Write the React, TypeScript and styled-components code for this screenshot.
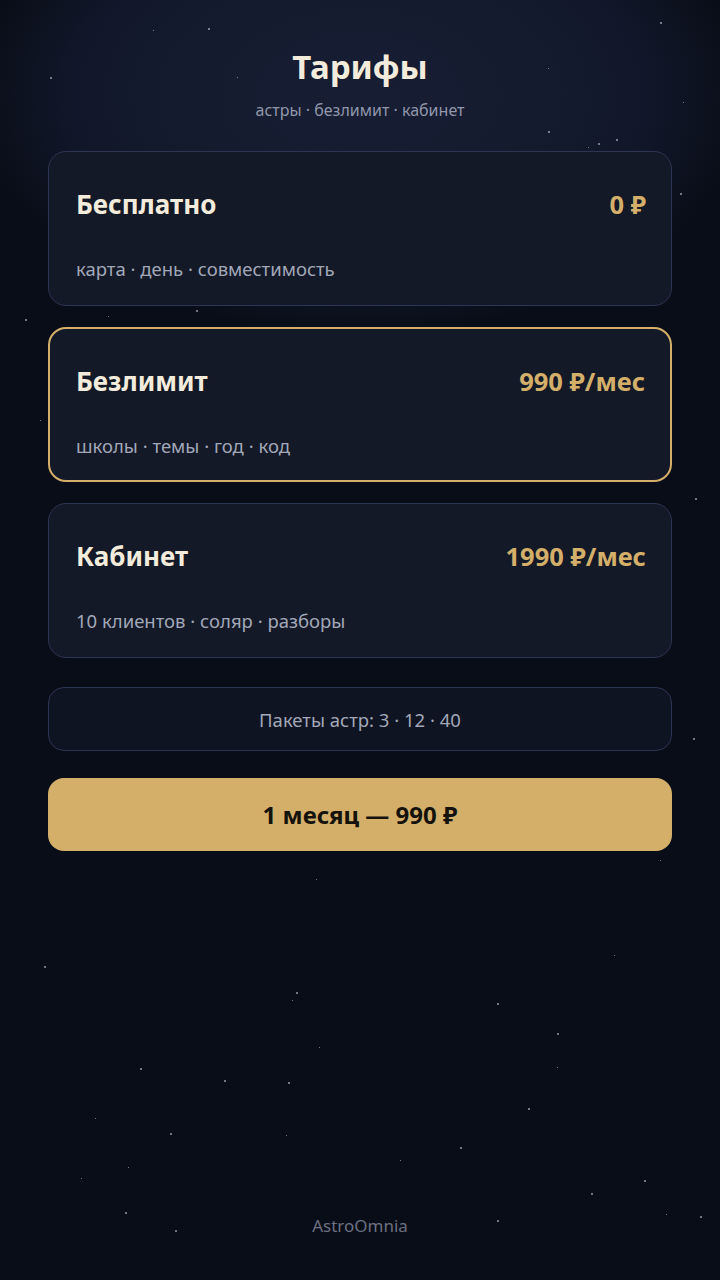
import styled, { createGlobalStyle } from "styled-components";

const GlobalStyle = createGlobalStyle`
  * { box-sizing: border-box; }
  html, body { margin: 0; padding: 0; background: #090d17; }
  body { font-family: "Noto Sans", "Open Sans", sans-serif; }
`;

const stars: [number, number, number][] = [
  [208, 28, 2], [50, 77, 2], [237, 77, 1], [153, 30, 1], [660, 22, 2], [548, 68, 1],
  [548, 131, 2], [598, 143, 2], [616, 139, 2], [588, 147, 1], [680, 193, 2], [25, 319, 2],
  [108, 316, 1], [196, 310, 2], [695, 498, 2], [693, 738, 2], [316, 879, 1], [44, 966, 2],
  [614, 955, 1], [296, 992, 2], [292, 1000, 1], [497, 1003, 2], [557, 1033, 2], [319, 1047, 1],
  [140, 1068, 2], [557, 1067, 1], [224, 1080, 2], [288, 1082, 2], [528, 1108, 2], [95, 1118, 1],
  [170, 1133, 2], [286, 1135, 1], [460, 1147, 2], [128, 1167, 1], [81, 1178, 1], [644, 1180, 2],
  [591, 1193, 2], [125, 1212, 2], [700, 1216, 2], [666, 1214, 1], [497, 1220, 2], [175, 1230, 2],
  [683, 102, 1], [40, 420, 1], [660, 860, 1], [400, 1160, 1],
];

const tariffs = [
  { name: "Бесплатно", price: "0 ₽", note: "карта · день · совместимость", active: false },
  { name: "Безлимит", price: "990 ₽/мес", note: "школы · темы · год · код", active: true },
  { name: "Кабинет", price: "1990 ₽/мес", note: "10 клиентов · соляр · разборы", active: false },
];

const Screen = styled.div`
  position: relative;
  min-height: 100vh;
  overflow: hidden;
  display: flex;
  flex-direction: column;
  padding: 0 48px 43px;
  background:
    radial-gradient(ellipse 390px 240px at 50% 95px, #171d33 0%, #151b2f 45%, #111729 75%, rgba(9, 13, 23, 0) 100%),
    #090d17;
`;

const Star = styled.span`
  position: absolute;
  border-radius: 50%;
  background: #c9cbd6;
  opacity: 0.75;
`;

const Header = styled.header`
  position: relative;
  display: flex;
  flex-direction: column;
  align-items: center;
  padding-top: 45px;
`;

const Title = styled.h1`
  margin: 0;
  font-size: 33px;
  line-height: 44px;
  font-weight: 700;
  color: #f3ecdc;
`;

const Subtitle = styled.p`
  margin: 11px 0 0;
  font-size: 16px;
  line-height: 20px;
  color: #9097ab;
`;

const List = styled.div`
  position: relative;
  display: flex;
  flex-direction: column;
  gap: 21px;
  margin-top: 31px;
`;

const Card = styled.div<{ $active: boolean }>`
  height: 155px;
  padding: 36px 25px 0 ${({ $active }) => ($active ? "26px" : "27px")};
  border-radius: 18px;
  background: #131927;
  border: ${({ $active }) => ($active ? "2px solid #d4af6a" : "1px solid #2d3554")};
`;

const CardTop = styled.div`
  display: flex;
  justify-content: space-between;
  align-items: center;
  height: 32px;
`;

const CardName = styled.span`
  font-size: 26px;
  font-weight: 700;
  color: #f3ecdc;
`;

const Price = styled.span`
  font-size: 25.5px;
  font-weight: 700;
  color: #d4af6a;
`;

const CardNote = styled.div`
  margin-top: 37px;
  font-size: 18.5px;
  line-height: 24px;
  color: #a2a8b8;
`;

const Packs = styled.div`
  position: relative;
  margin-top: 29px;
  height: 64px;
  display: flex;
  align-items: center;
  justify-content: center;
  border-radius: 16px;
  background: #0f1422;
  border: 1px solid #2d3554;
  font-size: 18.5px;
  color: #a2a8b8;
`;

const BuyButton = styled.button`
  position: relative;
  margin-top: 27px;
  height: 73px;
  border: none;
  border-radius: 16px;
  background: #d4af6a;
  color: #15120c;
  font-family: inherit;
  font-size: 24px;
  font-weight: 700;
  cursor: pointer;
`;

const Footer = styled.footer`
  position: relative;
  margin-top: auto;
  text-align: center;
  font-size: 17px;
  line-height: 22px;
  color: #6b7182;
`;

export default function App() {
  return (
    <>
      <GlobalStyle />
      <Screen>
        {stars.map(([x, y, s], i) => (
          <Star key={i} style={{ left: x, top: y, width: s, height: s }} />
        ))}
        <Header>
          <Title>Тарифы</Title>
          <Subtitle>астры · безлимит · кабинет</Subtitle>
        </Header>
        <List>
          {tariffs.map((t) => (
            <Card key={t.name} $active={t.active}>
              <CardTop>
                <CardName>{t.name}</CardName>
                <Price>{t.price}</Price>
              </CardTop>
              <CardNote>{t.note}</CardNote>
            </Card>
          ))}
        </List>
        <Packs>Пакеты астр: 3 · 12 · 40</Packs>
        <BuyButton>1 месяц — 990 ₽</BuyButton>
        <Footer>AstroOmnia</Footer>
      </Screen>
    </>
  );
}
